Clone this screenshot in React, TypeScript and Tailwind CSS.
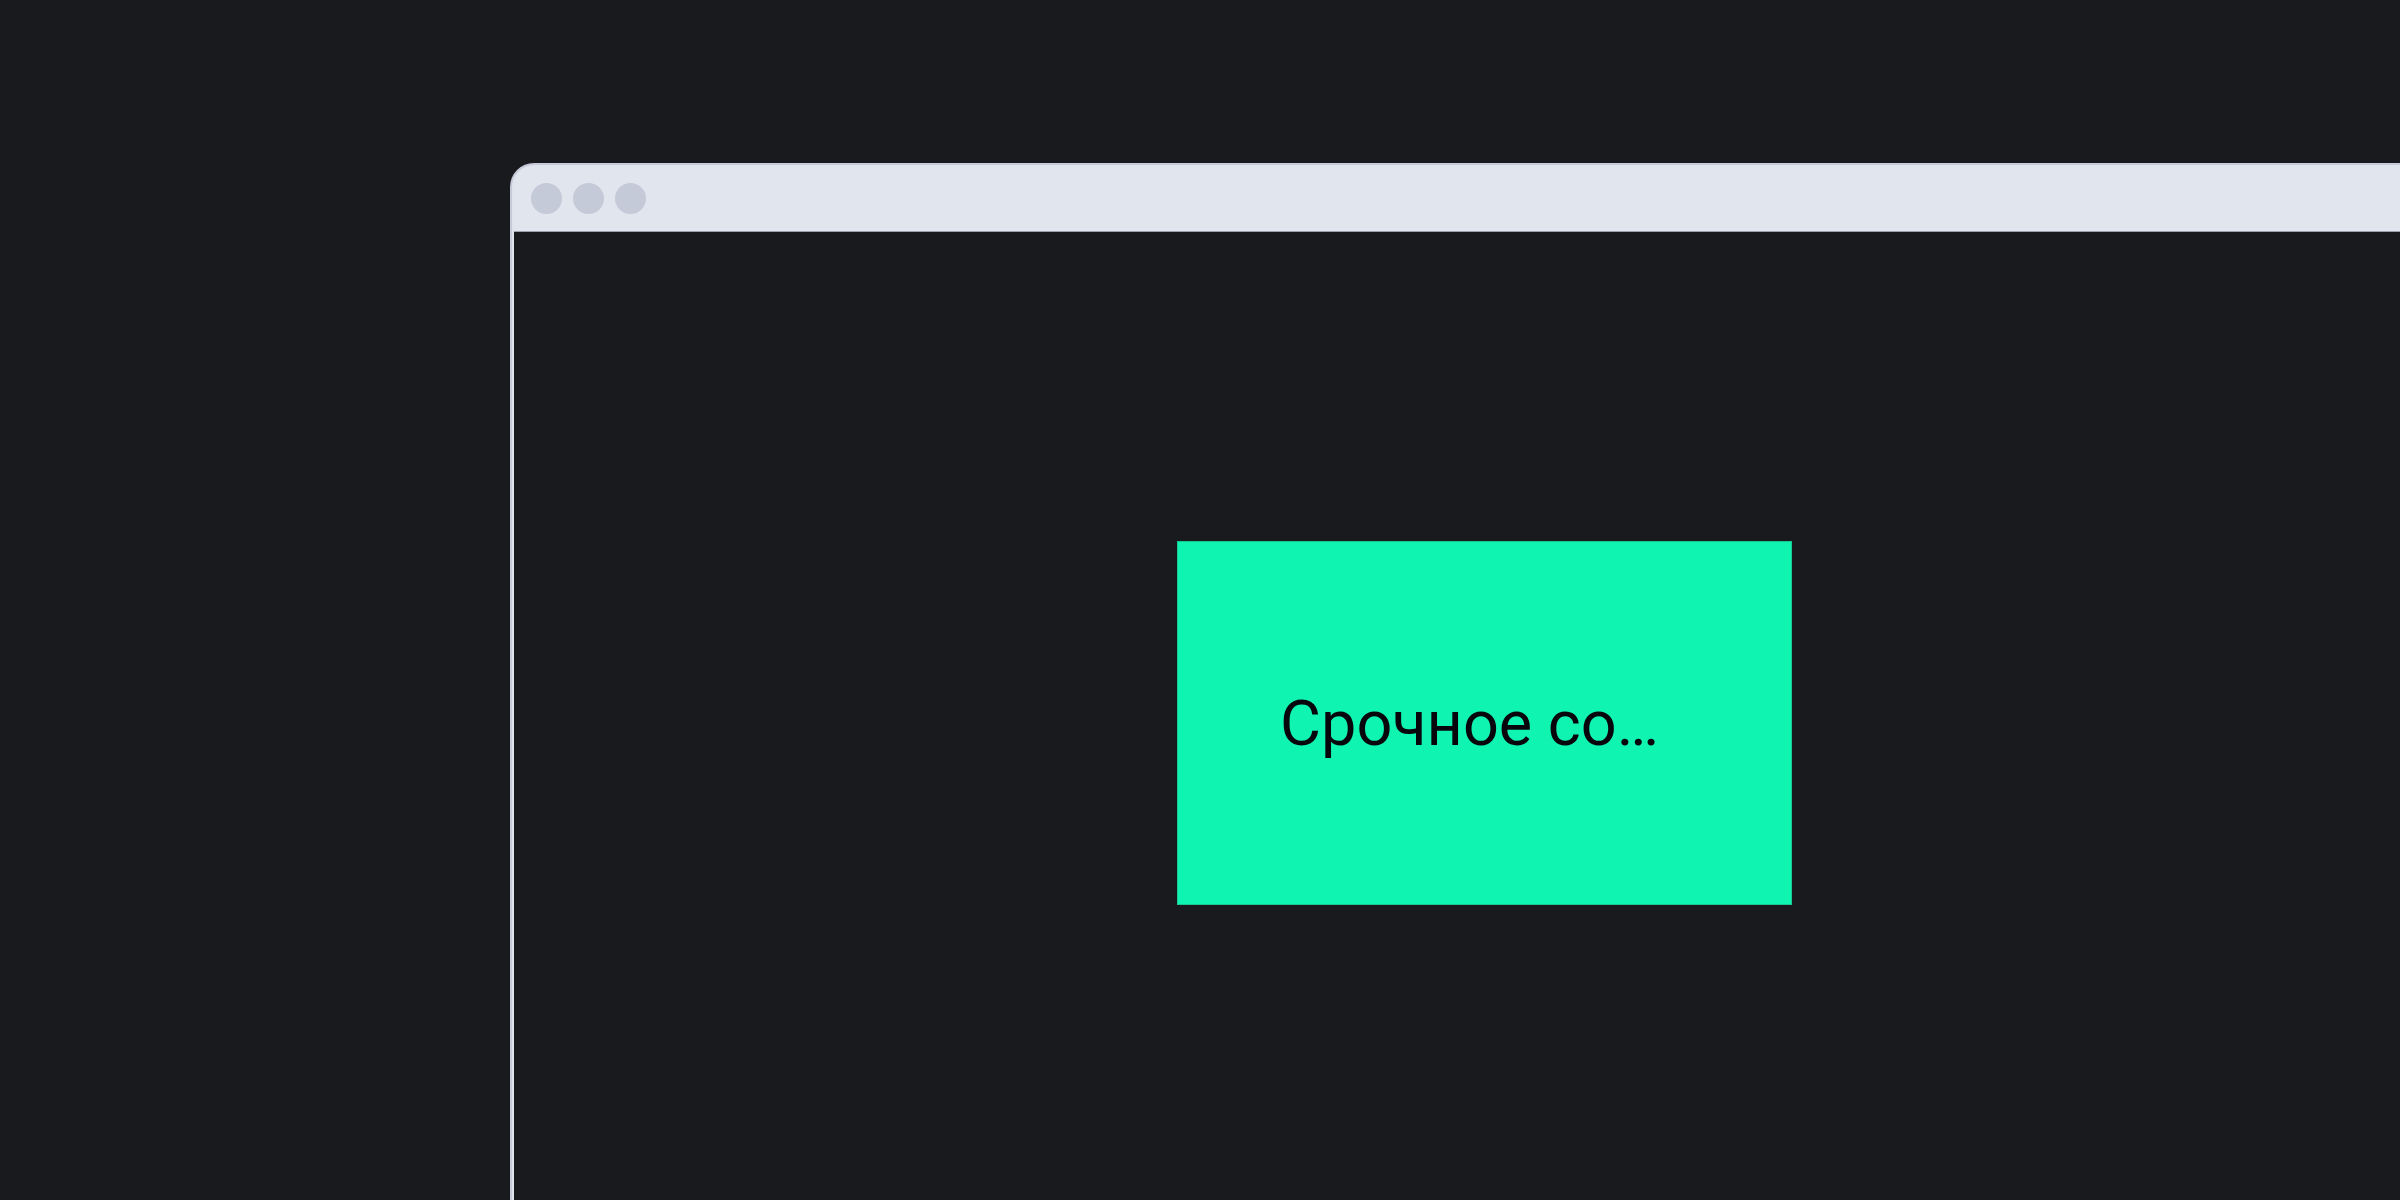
import React from "react";

export default function App() {
  return (
    <div className="w-[2400px] h-[1200px] overflow-hidden bg-[#191a1e] pl-[510px] pt-[163px]">
      <div className="w-[2000px] h-[1100px] rounded-tl-[24px] bg-[#c6cad9] pl-[2px] pt-[2px]">
        <div className="w-full h-full rounded-tl-[22px] bg-[#dfe3ec] pl-[2px] pt-[1px] flex flex-col">
          <div className="h-[66px] flex items-center gap-[11px] pl-[17px] pb-[1px] border-b border-[#9aa0ad] rounded-tl-[20px] bg-[#e0e5ee]">
            <div className="w-[31px] h-[31px] rounded-full bg-[#c5cad8]" />
            <div className="w-[31px] h-[31px] rounded-full bg-[#c5cad8]" />
            <div className="w-[31px] h-[31px] rounded-full bg-[#c5cad8]" />
          </div>
          <div className="flex-1 bg-[#191a1e] pl-[663px] pt-[309px]">
            <div className="w-[615px] h-[364px] bg-[#10f4b1] border border-[#18c892] flex items-center pl-[102px]">
              <span
                className="text-[63px] leading-none text-[#06060c] whitespace-nowrap"
                style={{ fontFamily: "Roboto, sans-serif" }}
              >
                Срочное со…
              </span>
            </div>
          </div>
        </div>
      </div>
    </div>
  );
}
